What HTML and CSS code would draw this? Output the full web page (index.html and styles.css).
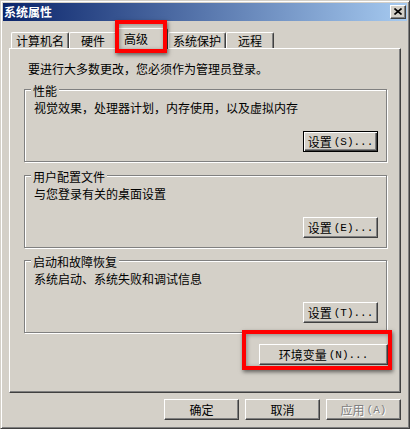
FILE: index.html
```html
<!DOCTYPE html>
<html lang="zh-CN">
<head>
<meta charset="utf-8">
<title>系统属性</title>
<link rel="stylesheet" href="styles.css">
</head>
<body>
<div class="window">
  <div class="titlebar">
    <span class="title">系统属性</span>
    <span class="close"><svg width="8" height="7" viewBox="0 0 8 7"><path d="M0.5 0.5 L7.5 6.5 M7.5 0.5 L0.5 6.5" stroke="#000" stroke-width="1.6" fill="none"/></svg></span>
  </div>
  <div class="content">
    <div class="tabs">
      <div class="tab w4">计算机名</div>
      <div class="tab w2">硬件</div>
      <div class="tab sel">高级</div>
      <div class="tab w4b">系统保护</div>
      <div class="tab w2">远程</div>
    </div>
    <div class="panel">
      <div class="intro">要进行大多数更改，您必须作为管理员登录。</div>
      <div class="group g1">
        <span class="legend">性能</span>
        <div class="desc">视觉效果，处理器计划，内存使用，以及虚拟内存</div>
        <button class="btn setbtn default">设置<span class="acc">(S)...</span></button>
      </div>
      <div class="group g2">
        <span class="legend">用户配置文件</span>
        <div class="desc">与您登录有关的桌面设置</div>
        <button class="btn setbtn">设置<span class="acc">(E)...</span></button>
      </div>
      <div class="group g3">
        <span class="legend">启动和故障恢复</span>
        <div class="desc">系统启动、系统失败和调试信息</div>
        <button class="btn setbtn">设置<span class="acc">(T)...</span></button>
      </div>
      <button class="btn envbtn">环境变量<span class="acc">(N)...</span></button>
    </div>
    <div class="actions">
      <button class="btn act">确定</button>
      <button class="btn act">取消</button>
      <button class="btn act disabled">应用<span class="acc">(A)</span></button>
    </div>
  </div>
  <div class="mark mark-tab"></div>
  <div class="mark mark-env"></div>
</div>
</body>
</html>
```
FILE: styles.css
```css
* { box-sizing: border-box; }
html, body { margin: 0; padding: 0; }
body {
  background: #D4D0C8;
  font-family: "Noto Sans CJK SC", "Noto Sans", sans-serif;
  font-size: 12px;
  color: #000;
}
.window {
  position: relative;
  width: 410px;
  height: 429px;
  background: #D4D0C8;
  border: 1px solid;
  border-color: #D4D0C8 #404040 #404040 #D4D0C8;
  box-shadow: inset 1px 1px #fff, inset -1px -1px #808080;
  padding: 2px;
  overflow: hidden;
}
.titlebar {
  height: 18px;
  background: linear-gradient(to right, #0A246A, #A6CAF0);
  display: flex;
  align-items: center;
  justify-content: space-between;
  padding: 0 1px 0 1px;
}
.title {
  color: #fff;
  font-weight: bold;
  font-size: 12px;
  line-height: 18px;
  letter-spacing: 0;
}
.close {
  width: 16px;
  height: 14px;
  background: #D4D0C8;
  border: 1px solid;
  border-color: #fff #404040 #404040 #fff;
  box-shadow: inset -1px -1px #808080;
  display: flex;
  align-items: center;
  justify-content: center;
  padding-bottom: 1px;
}
.close svg { display: block; }
.content {
  padding: 7px 0 0 6px;
}
.tabs {
  display: flex;
  align-items: flex-end;
  height: 20px;
  padding-left: 2px;
  position: relative;
  z-index: 1;
}
.tab {
  height: 16px;
  line-height: 14px;
  text-align: center;
  background: #D4D0C8;
  border-top: 1px solid #fff;
  border-left: 1px solid #fff;
  border-right: 1px solid #404040;
  box-shadow: inset -1px 0 #808080;
  border-radius: 2px 2px 0 0;
  white-space: nowrap;
  padding-top: 1px;
}
.w4 { width: 58px; }
.w4b { width: 58px; }
.w2 { width: 48px; }
.tab.sel {
  width: 51px;
  height: 21px;
  margin-bottom: -1px;
  padding-top: 3px;
  text-align: left;
  padding-left: 6px;
}
.panel {
  width: 392px;
  height: 345px;
  border: 1px solid;
  border-color: #fff #404040 #404040 #fff;
  box-shadow: inset -1px -1px #808080;
  padding: 13px 13px 0 14px;
  display: flex;
  flex-direction: column;
}
.intro {
  line-height: 14px;
  padding-left: 4px;
}
.group {
  height: 73px;
  border: 1px solid #808080;
  box-shadow: inset 1px 1px #fff, 1px 1px #fff;
  padding: 0 8px 9px 9px;
  display: flex;
  flex-direction: column;
}
.g1 { margin-top: 13px; }
.g2 { margin-top: 13px; }
.g3 { margin-top: 12px; }
.legend {
  align-self: flex-start;
  margin: -6px 0 0 -3px;
  padding: 0 2px;
  background: #D4D0C8;
  line-height: 14px;
}
.desc {
  line-height: 14px;
  margin-top: 3px;
}
.btn {
  font-family: "Noto Sans CJK SC", "Noto Sans", sans-serif;
  font-size: 12px;
  color: #000;
  height: 21px;
  background: #D4D0C8;
  border: 1px solid;
  border-color: #fff #404040 #404040 #fff;
  box-shadow: inset -1px -1px #808080;
  padding: 0;
  margin: 0;
  line-height: 18px;
  display: flex;
  align-items: center;
  justify-content: center;
}
.btn.default {
  border: 1px solid #000;
  box-shadow: inset 1px 1px #fff, inset -1px -1px #404040, inset -2px -2px #808080;
}
.acc {
  font-family: "Liberation Mono", "DejaVu Sans Mono", monospace;
  font-size: 11px;
  margin-left: 2px;
}
.setbtn {
  width: 75px;
  margin-top: auto;
  align-self: flex-end;
}
.envbtn {
  width: 129px;
  align-self: flex-end;
  margin-top: 11px;
  margin-right: -1px;
}
.actions {
  width: 392px;
  display: flex;
  justify-content: flex-end;
  gap: 6px;
  margin-top: 6px;
}
.act { width: 75px; }
.disabled {
  color: #808080;
  text-shadow: 1px 1px #fff;
}
.mark {
  position: absolute;
  border: 4px solid #FF0000;
  box-shadow: 1px 2px 4px rgba(0,0,0,0.55), inset 1px 1px 4px rgba(0,0,0,0.35);
  z-index: 5;
}
.mark-tab {
  left: 114px;
  top: 19px;
  width: 52px;
  height: 33px;
}
.mark-env {
  left: 241px;
  top: 329px;
  width: 150px;
  height: 40px;
}
```
